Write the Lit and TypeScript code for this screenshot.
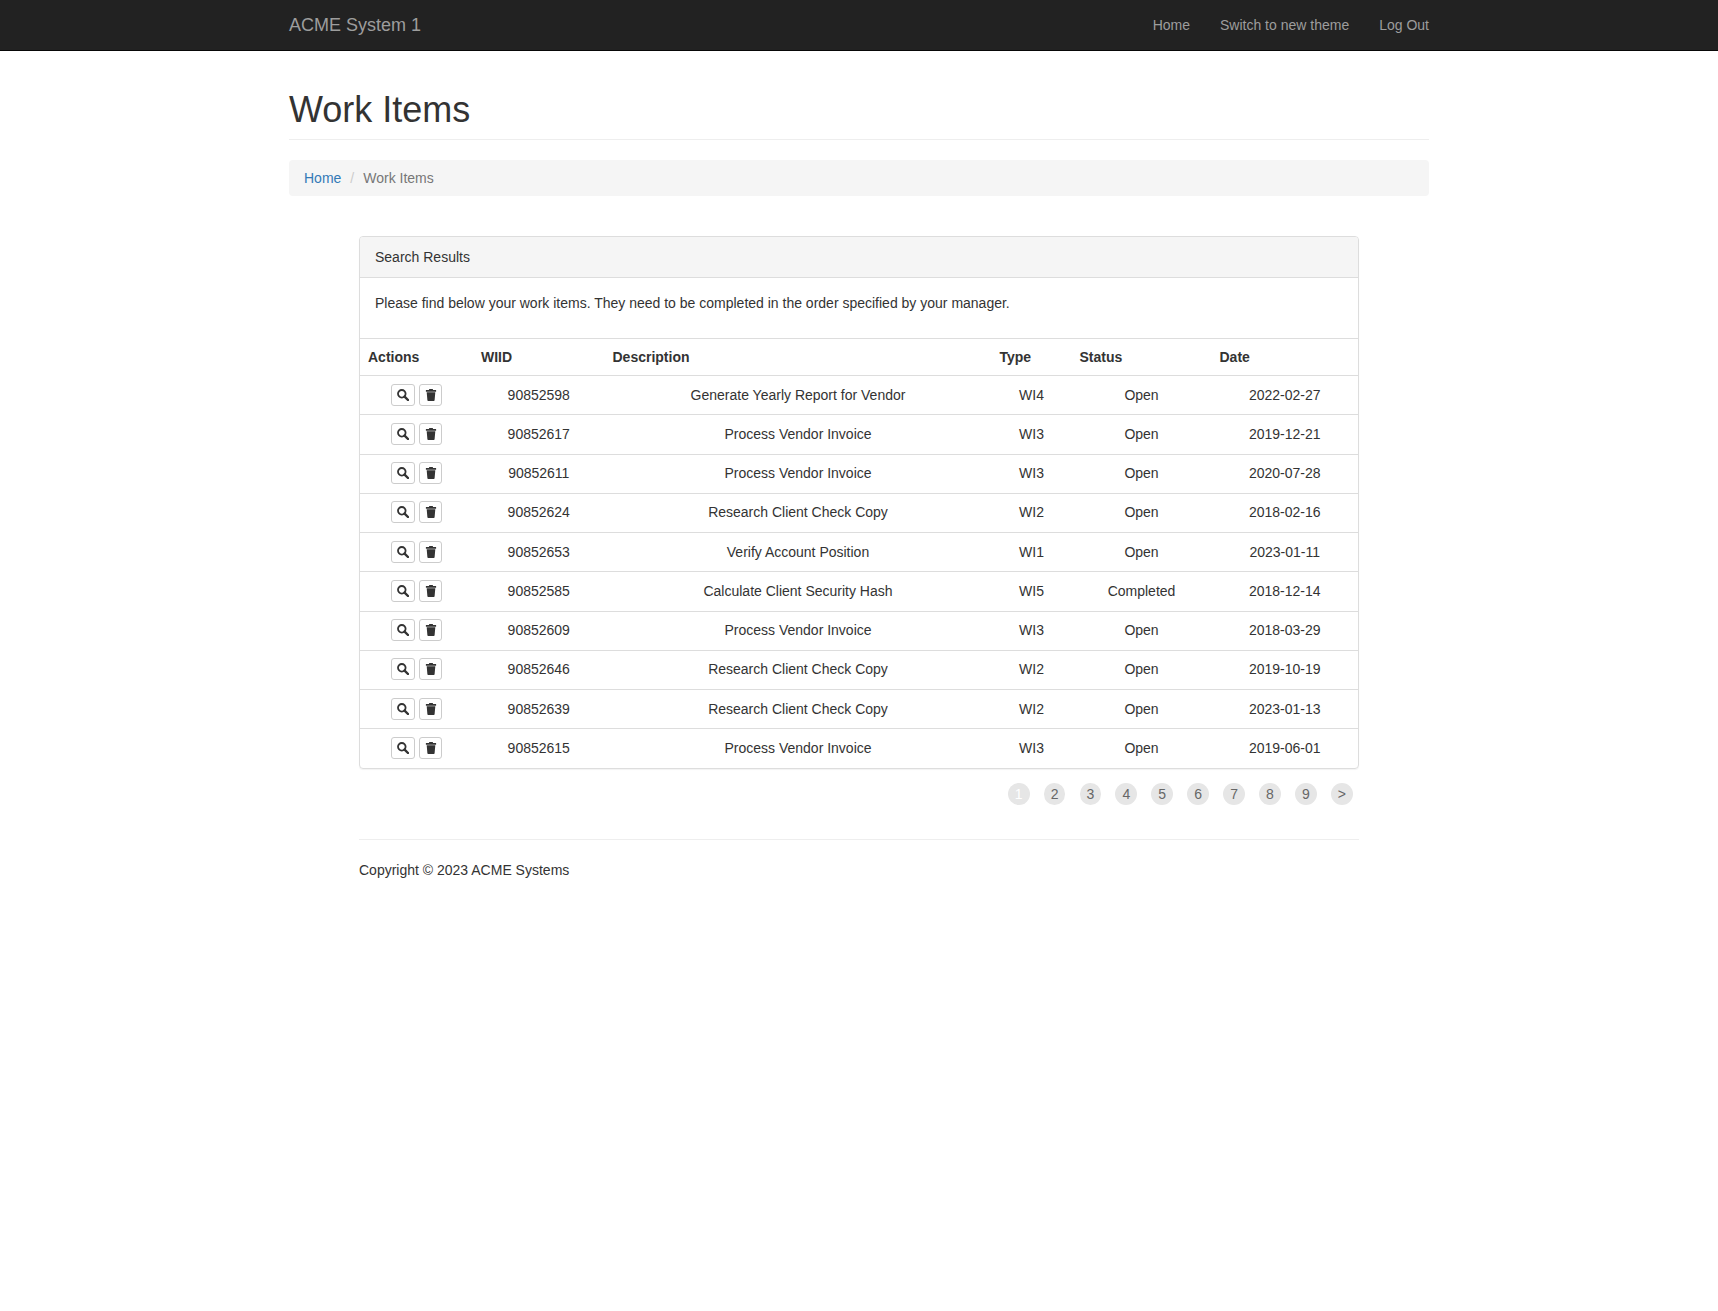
import { html, css, LitElement } from 'lit';
import { customElement } from 'lit/decorators.js';

const rows = [
  ['90852598', 'Generate Yearly Report for Vendor', 'WI4', 'Open', '2022-02-27'],
  ['90852617', 'Process Vendor Invoice', 'WI3', 'Open', '2019-12-21'],
  ['90852611', 'Process Vendor Invoice', 'WI3', 'Open', '2020-07-28'],
  ['90852624', 'Research Client Check Copy', 'WI2', 'Open', '2018-02-16'],
  ['90852653', 'Verify Account Position', 'WI1', 'Open', '2023-01-11'],
  ['90852585', 'Calculate Client Security Hash', 'WI5', 'Completed', '2018-12-14'],
  ['90852609', 'Process Vendor Invoice', 'WI3', 'Open', '2018-03-29'],
  ['90852646', 'Research Client Check Copy', 'WI2', 'Open', '2019-10-19'],
  ['90852639', 'Research Client Check Copy', 'WI2', 'Open', '2023-01-13'],
  ['90852615', 'Process Vendor Invoice', 'WI3', 'Open', '2019-06-01'],
];

const pages = ['1', '2', '3', '4', '5', '6', '7', '8', '9', '>'];

const searchIcon = html`<svg class="icon" viewBox="0 0 12 12"><circle cx="4.800" cy="4.800" r="3.800" fill="none" stroke="currentColor" stroke-width="1.800"/><path d="M7.600 7.600 11 11" fill="none" stroke="currentColor" stroke-width="2.400" stroke-linecap="round"/></svg>`;

const trashIcon = html`<svg class="icon" viewBox="0 0 12 12"><path fill="currentColor" d="M4.300 0h3.400l.4 1.100h3v1.700H.9V1.100h3zM1.700 3.200h8.600l-.7 8.100a.8.8 0 0 1-.8.7H3.200a.8.8 0 0 1-.8-.7z"/></svg>`;

@customElement('app-root')
export class AppRoot extends LitElement {
  static styles = css`
    :host {
      display: block;
      min-height: 1311px;
      background: #fff;
      color: #333;
      font-family: 'Liberation Sans', Arial, sans-serif;
      font-size: 14px;
      line-height: 20px;
    }

    * {
      box-sizing: border-box;
    }

    .navbar {
      height: 51px;
      background: #222;
      border-bottom: 1px solid #080808;
    }

    .container {
      width: 1140px;
      margin: 0 auto;
    }

    .nav-inner {
      display: flex;
      justify-content: space-between;
      align-items: center;
      height: 50px;
    }

    .brand {
      color: #9d9d9d;
      font-size: 18px;
    }

    .links {
      display: flex;
      gap: 30px;
      color: #9d9d9d;
    }

    .page-header {
      margin: 39px 0 20px;
      padding-bottom: 10px;
      border-bottom: 1px solid #eee;
    }

    h1 {
      margin: 0;
      font-size: 36px;
      font-weight: 500;
      line-height: 39px;
    }

    .breadcrumb {
      display: flex;
      height: 36px;
      padding: 8px 15px;
      margin-bottom: 40px;
      background: #f5f5f5;
      border-radius: 4px;
      color: #777;
    }

    .breadcrumb a {
      color: #337ab7;
    }

    .sep {
      padding: 0 9px;
      color: #ccc;
    }

    .content {
      width: 1000px;
      margin: 0 auto;
    }

    .panel {
      border: 1px solid #ddd;
      border-radius: 4px;
      box-shadow: 0 1px 1px rgba(0, 0, 0, 0.05);
      overflow: hidden;
    }

    .panel-heading {
      padding: 10px 15px;
      height: 41px;
      background: #f5f5f5;
      border-bottom: 1px solid #ddd;
    }

    .panel-body {
      padding: 15px;
      height: 60px;
    }

    table {
      width: 100%;
      table-layout: fixed;
      border-collapse: collapse;
    }

    th {
      padding: 8px;
      height: 37px;
      text-align: left;
      font-weight: 700;
      border-top: 1px solid #ddd;
    }

    td {
      padding: 0 8px 1px;
      height: 39.25px;
      text-align: center;
      vertical-align: middle;
      border-top: 1px solid #ddd;
    }

    .c1 { width: 113px; }
    .c2 { width: 131.500px; }
    .c3 { width: 387px; }
    .c4 { width: 80px; }
    .c5 { width: 140px; }

    .actions {
      display: flex;
      justify-content: center;
      gap: 4px;
    }

    .btn {
      display: flex;
      align-items: center;
      justify-content: center;
      width: 24px;
      height: 22px;
      padding: 0;
      color: #333;
      background: #fff;
      border: 1px solid #ccc;
      border-radius: 3px;
    }

    .btn.trash {
      width: 23px;
    }

    .icon {
      display: block;
      width: 12px;
      height: 12px;
    }

    .pager {
      display: flex;
      justify-content: flex-end;
      gap: 14.100px;
      padding: 14px 6px 0 0;
      height: 50px;
    }

    .page {
      height: 22px;
      padding: 0 7px;
      line-height: 22px;
      color: #666;
      background: #e6e6e6;
      border-radius: 50%;
    }

    .page.current {
      color: #fff;
    }

    .footer {
      margin-top: 20px;
      padding-top: 20px;
      border-top: 1px solid #eee;
    }
  `;

  render() {
    return html`
      <nav class="navbar">
        <div class="container nav-inner">
          <span class="brand">ACME System 1</span>
          <div class="links">
            <span>Home</span>
            <span>Switch to new theme</span>
            <span>Log Out</span>
          </div>
        </div>
      </nav>
      <div class="container">
        <div class="page-header"><h1>Work Items</h1></div>
        <div class="breadcrumb">
          <a>Home</a><span class="sep">/</span><span>Work Items</span>
        </div>
        <div class="content">
          <div class="panel">
            <div class="panel-heading">Search Results</div>
            <div class="panel-body">
              Please find below your work items. They need to be completed in the order specified by your manager.
            </div>
            <table>
              <thead>
                <tr>
                  <th class="c1">Actions</th>
                  <th class="c2">WIID</th>
                  <th class="c3">Description</th>
                  <th class="c4">Type</th>
                  <th class="c5">Status</th>
                  <th>Date</th>
                </tr>
              </thead>
              <tbody>
                ${rows.map(
                  (r) => html`
                    <tr>
                      <td>
                        <div class="actions">
                          <button class="btn">${searchIcon}</button>
                          <button class="btn trash">${trashIcon}</button>
                        </div>
                      </td>
                      ${r.map((v) => html`<td>${v}</td>`)}
                    </tr>
                  `
                )}
              </tbody>
            </table>
          </div>
          <div class="pager">
            ${pages.map((p, i) => html`<span class="page ${i === 0 ? 'current' : ''}">${p}</span>`)}
          </div>
          <div class="footer">Copyright © 2023 ACME Systems</div>
        </div>
      </div>
    `;
  }
}
